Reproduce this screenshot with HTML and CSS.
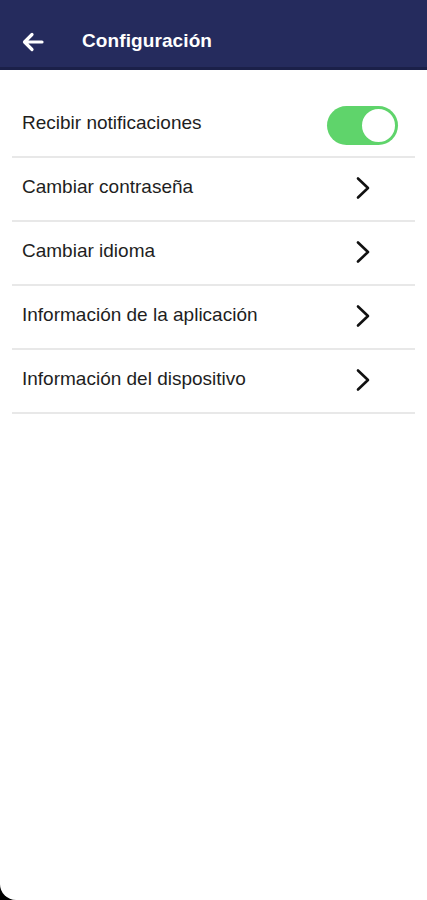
FILE: index.html
```html
<!DOCTYPE html>
<html lang="es">
<head>
    <meta charset="UTF-8">
    <meta name="viewport" content="width=device-width, initial-scale=1.0">
    <title>Configuración</title>
    <link rel="stylesheet" href="styles.css">
</head>
<body>
    <div class="screen">
        <header class="top-bar">
            <button class="back-btn" aria-label="Volver">
                <svg width="22" height="20" viewBox="0 0 22 20">
                    <path d="M20 10 H3 M10 2.5 L2.5 10 L10 17.5" fill="none" stroke="#fff" stroke-width="3.2" stroke-linecap="round" stroke-linejoin="round"/>
                </svg>
            </button>
            <h1 class="title">Configuración</h1>
        </header>

        <ul class="settings-list">
            <li class="settings-item">
                <span class="item-label">Recibir notificaciones</span>
                <label class="switch">
                    <input type="checkbox" checked>
                    <span class="slider"></span>
                </label>
            </li>
            <li class="settings-item">
                <span class="item-label">Cambiar contraseña</span>
                <svg class="chevron" width="16" height="24" viewBox="0 0 16 24">
                    <path d="M3 2.5 L13 12 L3 21.5" fill="none" stroke="#111" stroke-width="2.6" stroke-linecap="round" stroke-linejoin="round"/>
                </svg>
            </li>
            <li class="settings-item">
                <span class="item-label">Cambiar idioma</span>
                <svg class="chevron" width="16" height="24" viewBox="0 0 16 24">
                    <path d="M3 2.5 L13 12 L3 21.5" fill="none" stroke="#111" stroke-width="2.6" stroke-linecap="round" stroke-linejoin="round"/>
                </svg>
            </li>
            <li class="settings-item">
                <span class="item-label">Información de la aplicación</span>
                <svg class="chevron" width="16" height="24" viewBox="0 0 16 24">
                    <path d="M3 2.5 L13 12 L3 21.5" fill="none" stroke="#111" stroke-width="2.6" stroke-linecap="round" stroke-linejoin="round"/>
                </svg>
            </li>
            <li class="settings-item">
                <span class="item-label">Información del dispositivo</span>
                <svg class="chevron" width="16" height="24" viewBox="0 0 16 24">
                    <path d="M3 2.5 L13 12 L3 21.5" fill="none" stroke="#111" stroke-width="2.6" stroke-linecap="round" stroke-linejoin="round"/>
                </svg>
            </li>
        </ul>
    </div>
</body>
</html>
```

FILE: styles.css
```css
html {
    background-color: black;
}
body {
    margin: 0;
    font-family: "Liberation Sans", Arial, sans-serif;
}
.screen {
    height: 900px;
    background-color: white;
    border-bottom-left-radius: 16px;
    overflow: hidden;
}
.top-bar {
    height: 53px;
    padding: 14px 0 0 22px;
    background-color: #252b5d;
    border-bottom: 3px solid #1b2049;
    display: flex;
    align-items: center;
}
.back-btn {
    background: none;
    border: none;
    padding: 0;
    margin: 2px 0 0 0;
    width: 22px;
    height: 20px;
    display: flex;
}
.title {
    margin: 0 0 0 38px;
    color: white;
    font-size: 19px;
    font-weight: bold;
    letter-spacing: 0.1px;
}
.settings-list {
    list-style: none;
    margin: 24px 12px 0 12px;
    padding: 0;
}
.settings-item {
    height: 62px;
    border-bottom: 2px solid #e8e8e8;
    display: flex;
    align-items: center;
    justify-content: space-between;
    padding: 0 0 0 10px;
}
.item-label {
    font-size: 19px;
    color: #1e1e1e;
    margin-bottom: 4px;
}
.chevron {
    margin: 0 44px 2px 0;
}
.switch {
    position: relative;
    width: 71px;
    height: 39px;
    margin: 0 17px 0 0;
}
.switch input {
    display: none;
}
.slider {
    position: absolute;
    inset: 0;
    background-color: #5fd46b;
    border-radius: 20px;
}
.slider::after {
    content: "";
    position: absolute;
    top: 1px;
    right: 1px;
    width: 33px;
    height: 33px;
    border-radius: 50%;
    background-color: white;
    border: 2px solid #5fd46b;
    box-sizing: content-box;
}
```
